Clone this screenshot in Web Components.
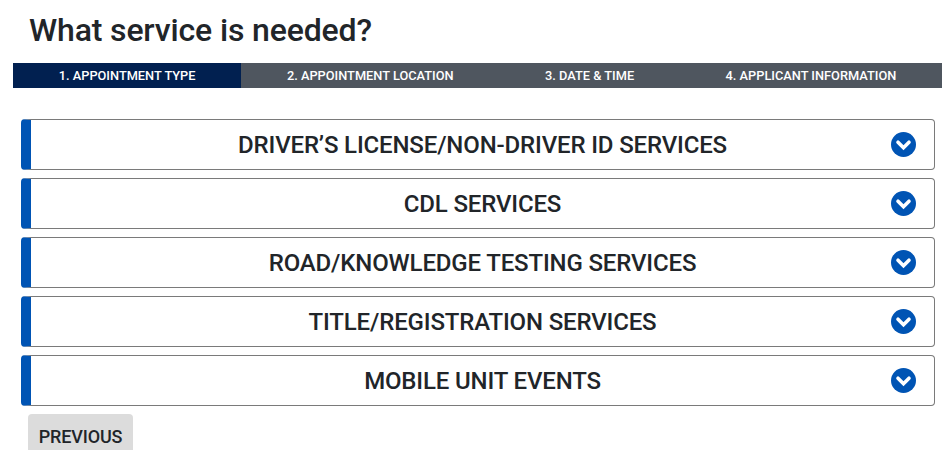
<!DOCTYPE html>
<html lang="en">
<head>
<meta charset="utf-8">
<title>What service is needed?</title>
<style>
    html, body{
        margin:0;
        padding:0;
        background:#fff;
        font-family:Roboto,"Liberation Sans",sans-serif;
        color:#212529;
    }
    body{
        height:450px;
        overflow:hidden;
    }
</style>
</head>
<body>
<appt-page>
    <span slot="title">What service is needed?</span>
    <step-bar slot="steps">
        <step-item active>1. APPOINTMENT TYPE</step-item>
        <step-item>2. APPOINTMENT LOCATION</step-item>
        <step-item>3. DATE &amp; TIME</step-item>
        <step-item>4. APPLICANT INFORMATION</step-item>
    </step-bar>
    <service-card>DRIVER’S LICENSE/NON-DRIVER ID SERVICES</service-card>
    <service-card>CDL SERVICES</service-card>
    <service-card>ROAD/KNOWLEDGE TESTING SERVICES</service-card>
    <service-card>TITLE/REGISTRATION SERVICES</service-card>
    <service-card>MOBILE UNIT EVENTS</service-card>
    <prev-button slot="footer">PREVIOUS</prev-button>
</appt-page>

<script>
(function(){

    class ApptPage extends HTMLElement{
        constructor(){
            super();
            this.attachShadow({mode:'open'});
            this.shadowRoot.innerHTML = `
            <style>
                :host{ display:block; }
                h1{
                    margin:0;
                    padding:11px 0 0 29px;
                    height:63px;
                    box-sizing:border-box;
                    font-size:32px;
                    line-height:38px;
                    font-weight:500;
                    letter-spacing:-0.15px;
                    color:#212529;
                }
                #steps{ padding:0 10px 0 13px; }
                #cards{
                    display:flex;
                    flex-direction:column;
                    gap:8px;
                    padding:31px 17px 0 21px;
                }
                #footer{ padding:8px 0 0 28px; }
            </style>
            <h1><slot name="title"></slot></h1>
            <div id="steps"><slot name="steps"></slot></div>
            <div id="cards"><slot></slot></div>
            <div id="footer"><slot name="footer"></slot></div>`;
        }
    }

    class StepBar extends HTMLElement{
        constructor(){
            super();
            this.attachShadow({mode:'open'});
            this.shadowRoot.innerHTML = `
            <style>
                :host{
                    display:flex;
                    height:25px;
                    background:#4f565f;
                }
            </style>
            <slot></slot>`;
        }
    }

    class StepItem extends HTMLElement{
        constructor(){
            super();
            this.attachShadow({mode:'open'});
            this.shadowRoot.innerHTML = `
            <style>
                :host{
                    display:flex;
                    flex:1 1 auto;
                    align-items:center;
                    justify-content:center;
                    padding:0 45px;
                    font-size:12.8px;
                    font-weight:500;
                    color:#fff;
                    white-space:nowrap;
                }
                :host([active]){ background:#012050; }
            </style>
            <slot></slot>`;
        }
    }

    class ServiceCard extends HTMLElement{
        constructor(){
            super();
            this.attachShadow({mode:'open'});
            this.shadowRoot.innerHTML = `
            <style>
                :host{
                    display:flex;
                    align-items:center;
                    box-sizing:border-box;
                    height:51px;
                    background:#fff;
                    border:1px solid #7a7a7a;
                    border-left:10px solid #0054b4;
                    border-radius:4px;
                    padding:0 18px 0 43px;
                }
                #label{
                    flex:1;
                    text-align:center;
                    font-size:24px;
                    font-weight:500;
                    letter-spacing:-0.15px;
                    color:#212529;
                }
                svg{
                    display:block;
                    width:25px;
                    height:25px;
                    flex:none;
                }
            </style>
            <div id="label"><slot></slot></div>
            <svg viewBox="0 0 25 25" aria-hidden="true">
                <circle cx="12.5" cy="12.5" r="12.5" fill="#0054b4"/>
                <path d="M7 10.2 L12.5 15.7 L18 10.2" fill="none" stroke="#fff" stroke-width="3.6" stroke-linecap="round" stroke-linejoin="miter"/>
            </svg>`;
        }
    }

    class PrevButton extends HTMLElement{
        constructor(){
            super();
            this.attachShadow({mode:'open'});
            this.shadowRoot.innerHTML = `
            <style>
                :host{
                    display:inline-flex;
                    align-items:center;
                    justify-content:center;
                    box-sizing:border-box;
                    width:105px;
                    height:44px;
                    background:#dcdcdc;
                    border-radius:4px;
                    font-size:18px;
                    font-weight:500;
                    letter-spacing:-0.15px;
                    color:#212529;
                }
            </style>
            <slot></slot>`;
        }
    }

    customElements.define('appt-page',ApptPage);
    customElements.define('step-bar',StepBar);
    customElements.define('step-item',StepItem);
    customElements.define('service-card',ServiceCard);
    customElements.define('prev-button',PrevButton);
})();
</script>
</body>
</html>
